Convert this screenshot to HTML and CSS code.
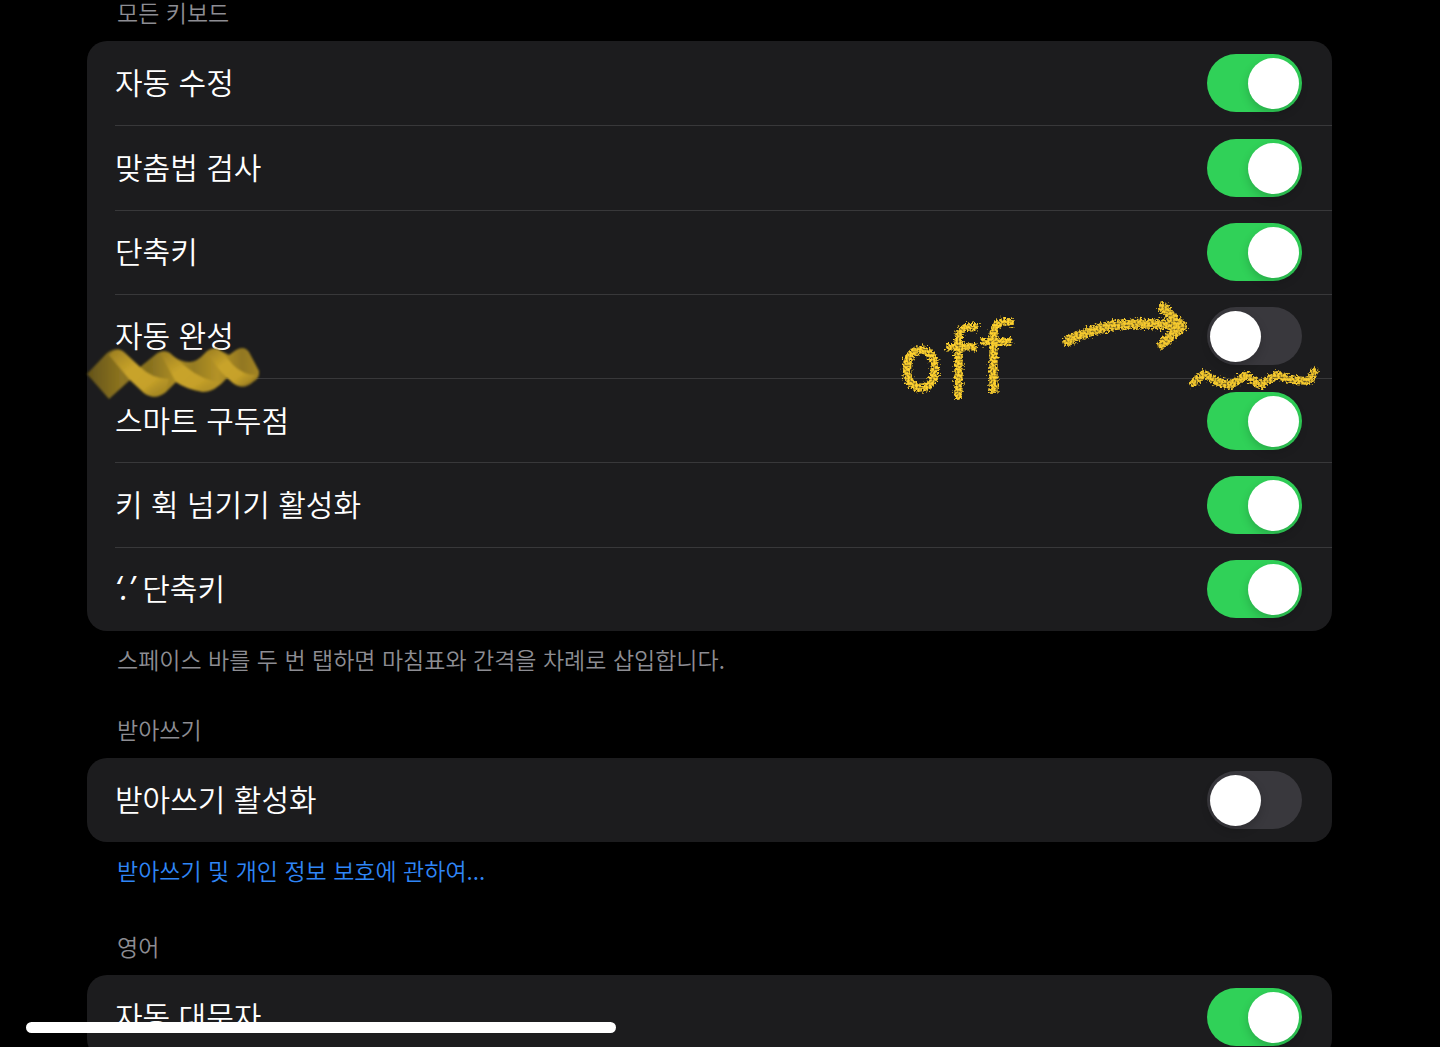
FILE: index.html
```html
<!DOCTYPE html>
<html lang="ko">
<head>
<meta charset="utf-8">
<meta name="viewport" content="width=device-width, initial-scale=1">
<title>키보드</title>
<link rel="stylesheet" href="styles.css">
</head>
<body>
<main class="settings">
  <section class="group">
    <h2 class="group-title">모든 키보드</h2>
    <div class="card card-list">
      <label class="row"><span class="label">자동 수정</span><input class="switch" type="checkbox" role="switch" checked></label>
      <label class="row"><span class="label">맞춤법 검사</span><input class="switch" type="checkbox" role="switch" checked></label>
      <label class="row"><span class="label">단축키</span><input class="switch" type="checkbox" role="switch" checked></label>
      <label class="row row-marked"><span class="label">자동 완성</span><input class="switch" type="checkbox" role="switch">
        <svg class="marker" width="180" height="60" viewBox="82 342 180 60" aria-hidden="true">
          <defs>
            <linearGradient id="base" gradientUnits="userSpaceOnUse" x1="87" y1="0" x2="259" y2="0">
              <stop offset="0" stop-color="#635318"/><stop offset=".2" stop-color="#8d7420"/>
              <stop offset=".36" stop-color="#86701f"/><stop offset=".5" stop-color="#a98a23"/>
              <stop offset=".62" stop-color="#957b21"/><stop offset=".76" stop-color="#b59326"/>
              <stop offset=".9" stop-color="#927720"/><stop offset="1" stop-color="#a38422"/>
            </linearGradient>
            <linearGradient id="fold" x1="0" y1="0" x2="1" y2="1">
              <stop offset="0" stop-color="#9a7d22"/><stop offset=".4" stop-color="#c9a42a"/>
              <stop offset=".7" stop-color="#c6a129"/><stop offset="1" stop-color="#b08f25" stop-opacity=".2"/>
            </linearGradient>
            <filter id="soft"><feGaussianBlur stdDeviation="1"/></filter>
          </defs>
          <g filter="url(#soft)">
            <path fill="url(#base)" d="M87 373L106 353Q116 344 126 353L140 366L155 354Q164 346 173 355Q181 361 190 361Q198 360 204 353Q213 344 221 350L229 354L236 349Q244 344 249 351L259 370Q260 377 253 381Q243 390 233 382L227 377Q215 391 203 391Q186 388 176 381L166 391Q155 400 144 392L130 379L109 398Z"/>
            <path fill="url(#fold)" d="M109 354Q118 344 125 352L140 366Q152 378 169 378L166 391Q155 400 144 392L130 379Z"/>
            <path fill="url(#fold)" d="M160 352Q167 348 173 355L186 366Q203 380 221 381Q213 391 203 391Q186 388 176 381Z"/>
            <path fill="url(#fold)" d="M206 351Q215 344 222 351L233 364Q243 374 256 374Q243 390 233 382L222 372Z"/>
          </g>
        </svg>
        <svg class="crayon" width="436" height="110" viewBox="894 296 436 110" aria-hidden="true">
          <defs>
            <filter id="grain" x="-5%" y="-10%" width="110%" height="120%">
              <feTurbulence type="fractalNoise" baseFrequency=".5" numOctaves="2" seed="4" result="n"/>
              <feDisplacementMap in="SourceGraphic" in2="n" scale="10" xChannelSelector="R" yChannelSelector="G" result="d"/>
              <feColorMatrix in="n" type="matrix" values="0 0 0 0 0  0 0 0 0 0  0 0 0 0 0  0 0 2 0 -.1" result="a"/>
              <feComposite in="d" in2="a" operator="in"/>
              <feGaussianBlur stdDeviation=".6"/>
            </filter>
          </defs>
          <g filter="url(#grain)">
            <text class="crayon-text" y="389"><tspan class="crayon-o" x="900">o</tspan><tspan x="944 979" y="396 391">ff</tspan></text>
            <g class="crayon-lines">
              <path d="M1068 340Q1088 329 1115 324Q1145 321 1182 325"/>
              <path d="M1163 306Q1171 316 1182 326Q1172 334 1162 343"/>
              <path class="crayon-wave" d="M1193 382L1204 373L1218 381L1231 384L1246 374L1260 384L1277 374L1292 379L1309 380L1314 371"/>
            </g>
          </g>
        </svg>
      </label>
      <label class="row"><span class="label">스마트 구두점</span><input class="switch" type="checkbox" role="switch" checked></label>
      <label class="row"><span class="label">키 휙 넘기기 활성화</span><input class="switch" type="checkbox" role="switch" checked></label>
      <label class="row"><span class="label"><span class="quote">‘.’</span> 단축키</span><input class="switch" type="checkbox" role="switch" checked></label>
    </div>
    <p class="note">스페이스 바를 두 번 탭하면 마침표와 간격을 차례로 삽입합니다.</p>
  </section>
  <section class="group">
    <h2 class="group-title">받아쓰기</h2>
    <div class="card">
      <label class="row"><span class="label">받아쓰기 활성화</span><input class="switch" type="checkbox" role="switch"></label>
    </div>
    <p class="note note-link"><a href="#privacy">받아쓰기 및 개인 정보 보호에 관하여...</a></p>
  </section>
  <section class="group">
    <h2 class="group-title">영어</h2>
    <div class="card">
      <label class="row"><span class="label">자동 대문자</span><input class="switch" type="checkbox" role="switch" checked></label>
    </div>
  </section>
</main>
<div class="home-indicator"></div>
</body>
</html>
```
FILE: styles.css
```css
* { box-sizing: border-box; }

body {
  margin: 0;
  height: 100vh;
  overflow: hidden;
  background: #000;
  color: #fff;
  font-family: "Noto Sans CJK KR", sans-serif;
  font-weight: 350;
}

.settings { padding: 0 108px 0 87px; }

.group-title,
.note {
  margin: 0;
  padding: 0 30px;
  font-size: 23px;
  font-weight: 350;
  line-height: 24px;
  color: #8d8d93;
}
.group-title { padding-bottom: 17px; }
.note { padding-top: 16px; padding-bottom: 46px; }
.note-link { padding-bottom: 52px; }
.note a { color: #2f86f6; text-decoration: none; }

.card {
  background: #1c1c1e;
  border-radius: 20px;
}
.card-list {
  display: grid;
  grid-auto-rows: 1fr;
  min-height: 590px;
}

.row {
  position: relative;
  display: flex;
  align-items: center;
  justify-content: space-between;
  min-height: 84px;
  margin-left: 28px;
  padding-right: 30px;
  font-size: 30px;
  line-height: 40px;
}
.row + .row { border-top: 1px solid #38383a; }
.row-marked { z-index: 1; }
.label { padding-bottom: 4px; }
.quote {
  font-family: "Open Sans", sans-serif;
  font-size: 32px;
  font-style: italic;
  font-weight: 500;
}

.switch {
  appearance: none;
  flex: none;
  width: 95px;
  height: 58px;
  margin: 0;
  padding: 4px 3px;
  border-radius: 29px;
  background: #39383d;
}
.switch::before {
  content: "";
  display: block;
  width: 51px;
  height: 51px;
  border-radius: 50%;
  background: #fff;
  box-shadow: 0 4px 10px rgba(0, 0, 0, .18);
}
.switch:checked { background: #30d158; }
.switch:checked::before { margin-left: auto; }

/* Hand-drawn annotations lying over the list */
.marker,
.crayon {
  position: absolute;
  overflow: visible;
  pointer-events: none;
}
.marker { left: -33px; top: 48px; }
.crayon { right: 2px; top: 2px; }
.crayon-text {
  font-family: "DejaVu Sans", sans-serif;
  font-size: 94px;
  fill: #ffd22e;
  stroke: #ffd22e;
  stroke-width: 4px;
}
.crayon-o {
  font-family: "DejaVu Sans Condensed", "DejaVu Sans", sans-serif;
  font-size: 76px;
  stroke-width: 2px;
}
.crayon-lines {
  fill: none;
  stroke: #f6ca2d;
  stroke-width: 10px;
  stroke-linecap: round;
  stroke-linejoin: round;
}
.crayon-wave { stroke-width: 8px; }

.home-indicator {
  position: fixed;
  left: 26px;
  bottom: 14px;
  width: 41%;
  height: 11px;
  border-radius: 6px;
  background: #fff;
}
```
